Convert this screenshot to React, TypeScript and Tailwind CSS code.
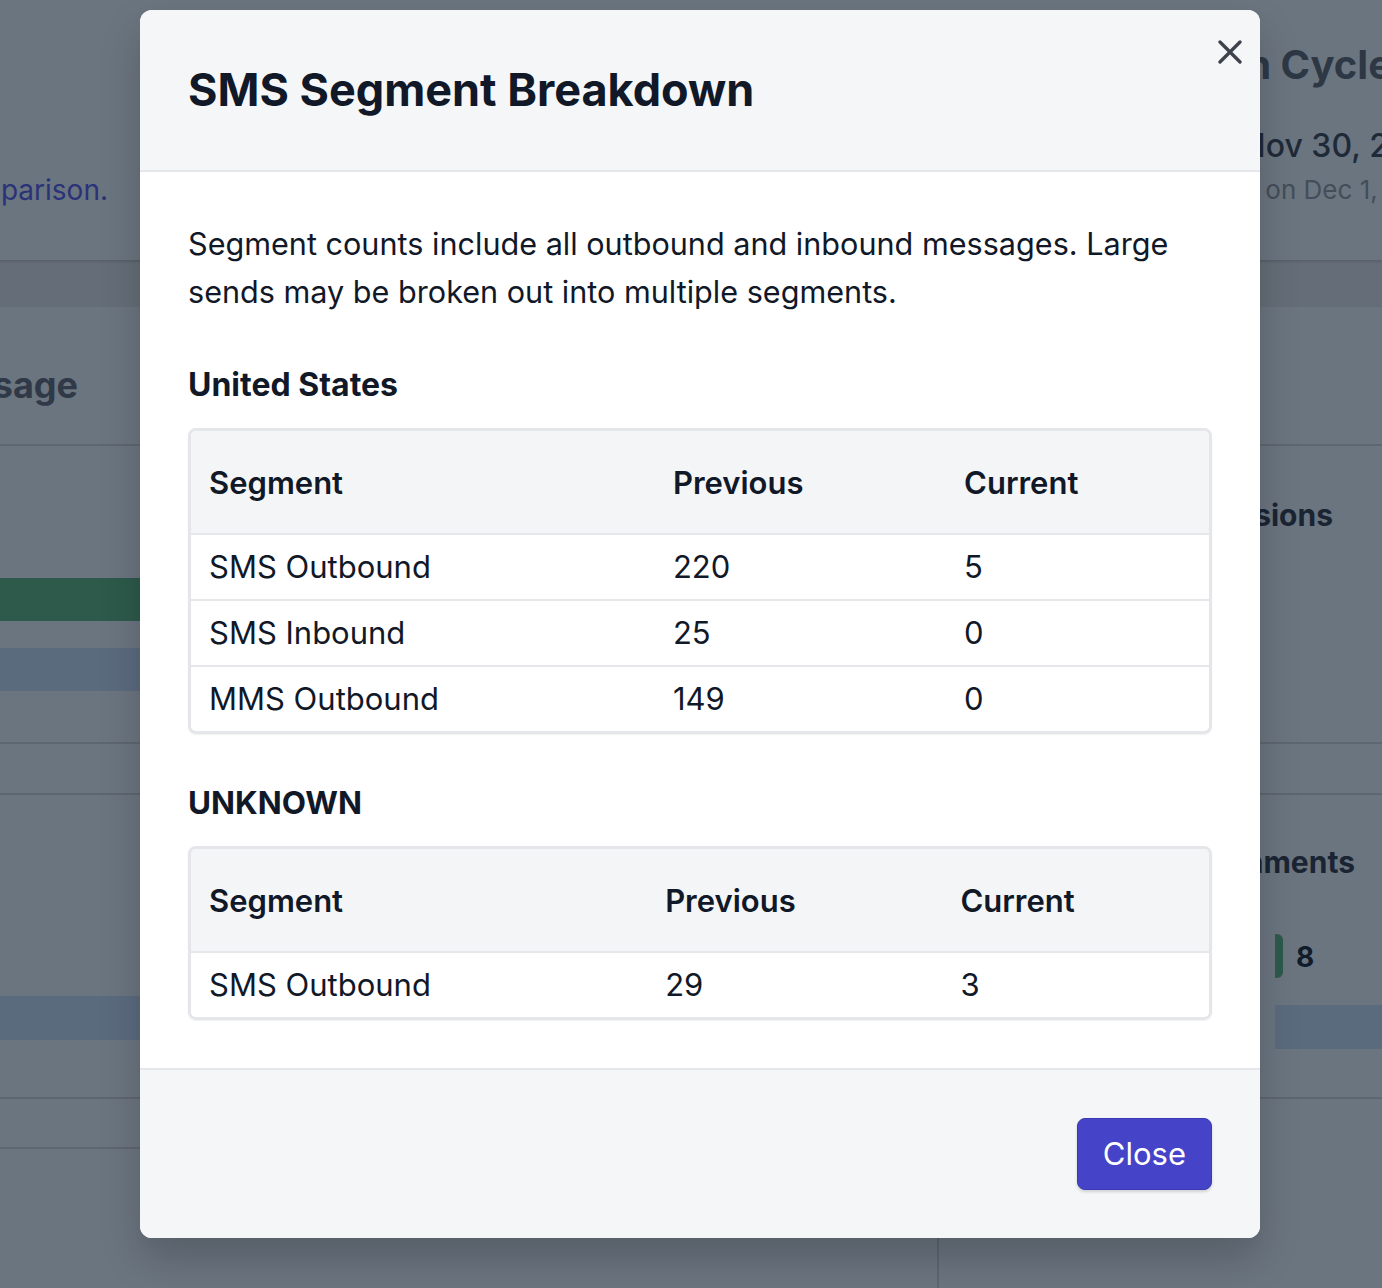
const US_ROWS = [
  { segment: 'SMS Outbound', previous: 220, current: 5 },
  { segment: 'SMS Inbound', previous: 25, current: 0 },
  { segment: 'MMS Outbound', previous: 149, current: 0 },
];

const UNKNOWN_ROWS = [{ segment: 'SMS Outbound', previous: 29, current: 3 }];

type Row = { segment: string; previous: number; current: number };

function SegmentTable({ rows }: { rows: Row[] }) {
  return (
    <div className="overflow-hidden rounded-lg border-[3px] border-[#e5e6e9] shadow-[0_1px_2px_rgba(0,0,0,0.06)]">
      <table className="w-full text-left text-[31px] text-[#111827]">
        <thead className="bg-[#f4f5f7]">
          <tr className="border-b-2 border-[#e5e7eb]">
            <th className="py-[30px] pl-[18px] pr-[19px] pt-[31px] leading-[41px] font-semibold">Segment</th>
            <th className="py-[30px] pl-[18px] pr-[19px] pt-[31px] leading-[41px] font-semibold">Previous</th>
            <th className="py-[30px] pl-[18px] pr-[19px] pt-[31px] leading-[41px] font-semibold">Current</th>
          </tr>
        </thead>
        <tbody className="bg-white">
          {rows.map((row, i) => (
            <tr key={row.segment} className={i < rows.length - 1 ? 'border-b-2 border-[#e5e7eb]' : ''}>
              <td className="py-3 pl-[18px] pr-[19px] leading-[40px]">{row.segment}</td>
              <td className="py-3 pl-[18px] pr-[19px] leading-[40px]">{row.previous}</td>
              <td className="py-3 pl-[18px] pr-[19px] leading-[40px]">{row.current}</td>
            </tr>
          ))}
        </tbody>
      </table>
    </div>
  );
}

function BackgroundPage() {
  return (
    <div className="min-h-[1288px] bg-[#656e78]">
      {/* Top summary card */}
      <div className="grid h-[260px] grid-cols-[941px_1fr] bg-[#6b7580] shadow-[0_2px_2px_rgba(0,0,0,0.12)]">
        <div className="flex w-[108px] justify-end pt-[170px]">
          <span className="whitespace-nowrap text-[28px] leading-[40px] text-[#2a3278]">
            Segments are grouped by destination country for comparison.
          </span>
        </div>
        <div className="flex flex-col">
          <div className="flex w-[451px] justify-end pt-[41px]">
            <span className="whitespace-nowrap text-[40px] font-bold leading-[48px] text-[#2e3845]">
              Subscription Cycle
            </span>
          </div>
          <div className="flex w-[508px] justify-end pt-[37px]">
            <span className="whitespace-nowrap text-[32px] font-medium leading-[40px] text-[#1f2a38]">
              Nov 1, 2025 – Nov 30, 2025
            </span>
          </div>
          <div className="flex w-[508px] justify-end pt-[6px]">
            <span className="whitespace-nowrap text-[26px] leading-[36px] text-[#444d58]">
              Renews on Dec 1, 2025
            </span>
          </div>
        </div>
      </div>

      {/* Usage card */}
      <div className="mt-[47px] grid grid-cols-[939px_1fr] bg-[#6b7580]">
        <div className="border-r-2 border-[#5e6670]">
          <div className="h-[139px] border-b-2 border-[#5e6670]">
            <div className="flex w-[78px] justify-end pt-[56px]">
              <span className="whitespace-nowrap text-[36px] font-bold leading-[44px] text-[#2f3947]">
                Message Usage
              </span>
            </div>
          </div>
          <div className="h-[298px] border-b-2 border-[#5e6670] pt-[132px]">
            <div className="h-[43px] bg-[#2d5a4b]" />
            <div className="mt-[27px] h-[43px] bg-[#5b6b7e]" />
          </div>
          <div className="h-[51px] border-b-2 border-[#5e6670]" />
          <div className="h-[304px] border-b-2 border-[#5e6670] pt-[201px]">
            <div className="h-[44px] bg-[#5b6b7e]" />
          </div>
          <div className="h-[50px] border-b-2 border-[#5e6670]" />
          <div className="h-[200px]" />
        </div>
        <div>
          <div className="h-[139px] border-b-2 border-[#5e6670]" />
          <div className="h-[298px] border-b-2 border-[#5e6670]">
            <div className="flex w-[394px] justify-end pt-[49px]">
              <span className="whitespace-nowrap text-[30px] font-bold leading-[40px] text-[#1a2433]">
                Sessions
              </span>
            </div>
          </div>
          <div className="h-[51px] border-b-2 border-[#5e6670]" />
          <div className="h-[304px] border-b-2 border-[#5e6670]">
            <div className="flex w-[416px] justify-end pt-[47px]">
              <span className="whitespace-nowrap text-[30px] font-bold leading-[40px] text-[#1a2433]">
                Attachments
              </span>
            </div>
            <div className="mt-[50px] flex items-center pl-[336px]">
              <div className="h-[44px] w-[8px] rounded-r-md bg-[#2d5a4b]" />
              <span className="ml-[13px] pt-[3px] text-[28px] font-bold leading-[44px] text-[#111c2b]">8</span>
            </div>
            <div className="ml-[336px] mt-[26px] h-[44px] bg-[#5b6b7e]" />
          </div>
        </div>
      </div>
    </div>
  );
}

export default function App() {
  return (
    <div className="relative h-[1288px] w-full overflow-hidden font-['Inter','Liberation_Sans',sans-serif]">
      <BackgroundPage />

      {/* Dialog */}
      <div className="absolute inset-0 pl-[140px] pt-[10px]">
        <div className="relative w-[1120px] overflow-hidden rounded-xl bg-white shadow-[0_20px_40px_rgba(0,0,0,0.2)]">
          <div className="border-b-2 border-[#e5e7eb] bg-[#f5f6f8] px-12 py-12">
            <h2 className="text-[45px] font-bold leading-[64px] text-[#111827]">SMS Segment Breakdown</h2>
          </div>
          <button className="absolute right-[18px] top-[30px] text-[#3d434c]" aria-label="Close">
            <svg width="24" height="24" viewBox="0 0 24 24" fill="none" stroke="currentColor" strokeWidth="3.3" strokeLinecap="round">
              <path d="M2 2 22 22M22 2 2 22" />
            </svg>
          </button>

          <div className="p-12">
            <p className="text-[30.6px] leading-[48px] text-[#111827]">
              Segment counts include all outbound and inbound messages. Large sends may be broken out into multiple
              segments.
            </p>

            <h3 className="mb-[23px] mt-[49px] text-[32px] font-bold leading-[40px] text-[#111827]">United States</h3>
            <SegmentTable rows={US_ROWS} />

            <h3 className="mb-[23px] mt-[49px] text-[31.5px] font-bold leading-[40px] text-[#111827]">UNKNOWN</h3>
            <SegmentTable rows={UNKNOWN_ROWS} />
          </div>

          <div className="flex justify-end border-t-2 border-[#e5e7eb] bg-[#f5f6f8] p-12">
            <button className="rounded-lg border border-[#3b39b3] bg-[#4543c7] px-[25px] py-[15px] text-[31px] leading-[40px] text-white shadow-[0_2px_3px_rgba(0,0,0,0.15)]">
              Close
            </button>
          </div>
        </div>
      </div>
    </div>
  );
}
